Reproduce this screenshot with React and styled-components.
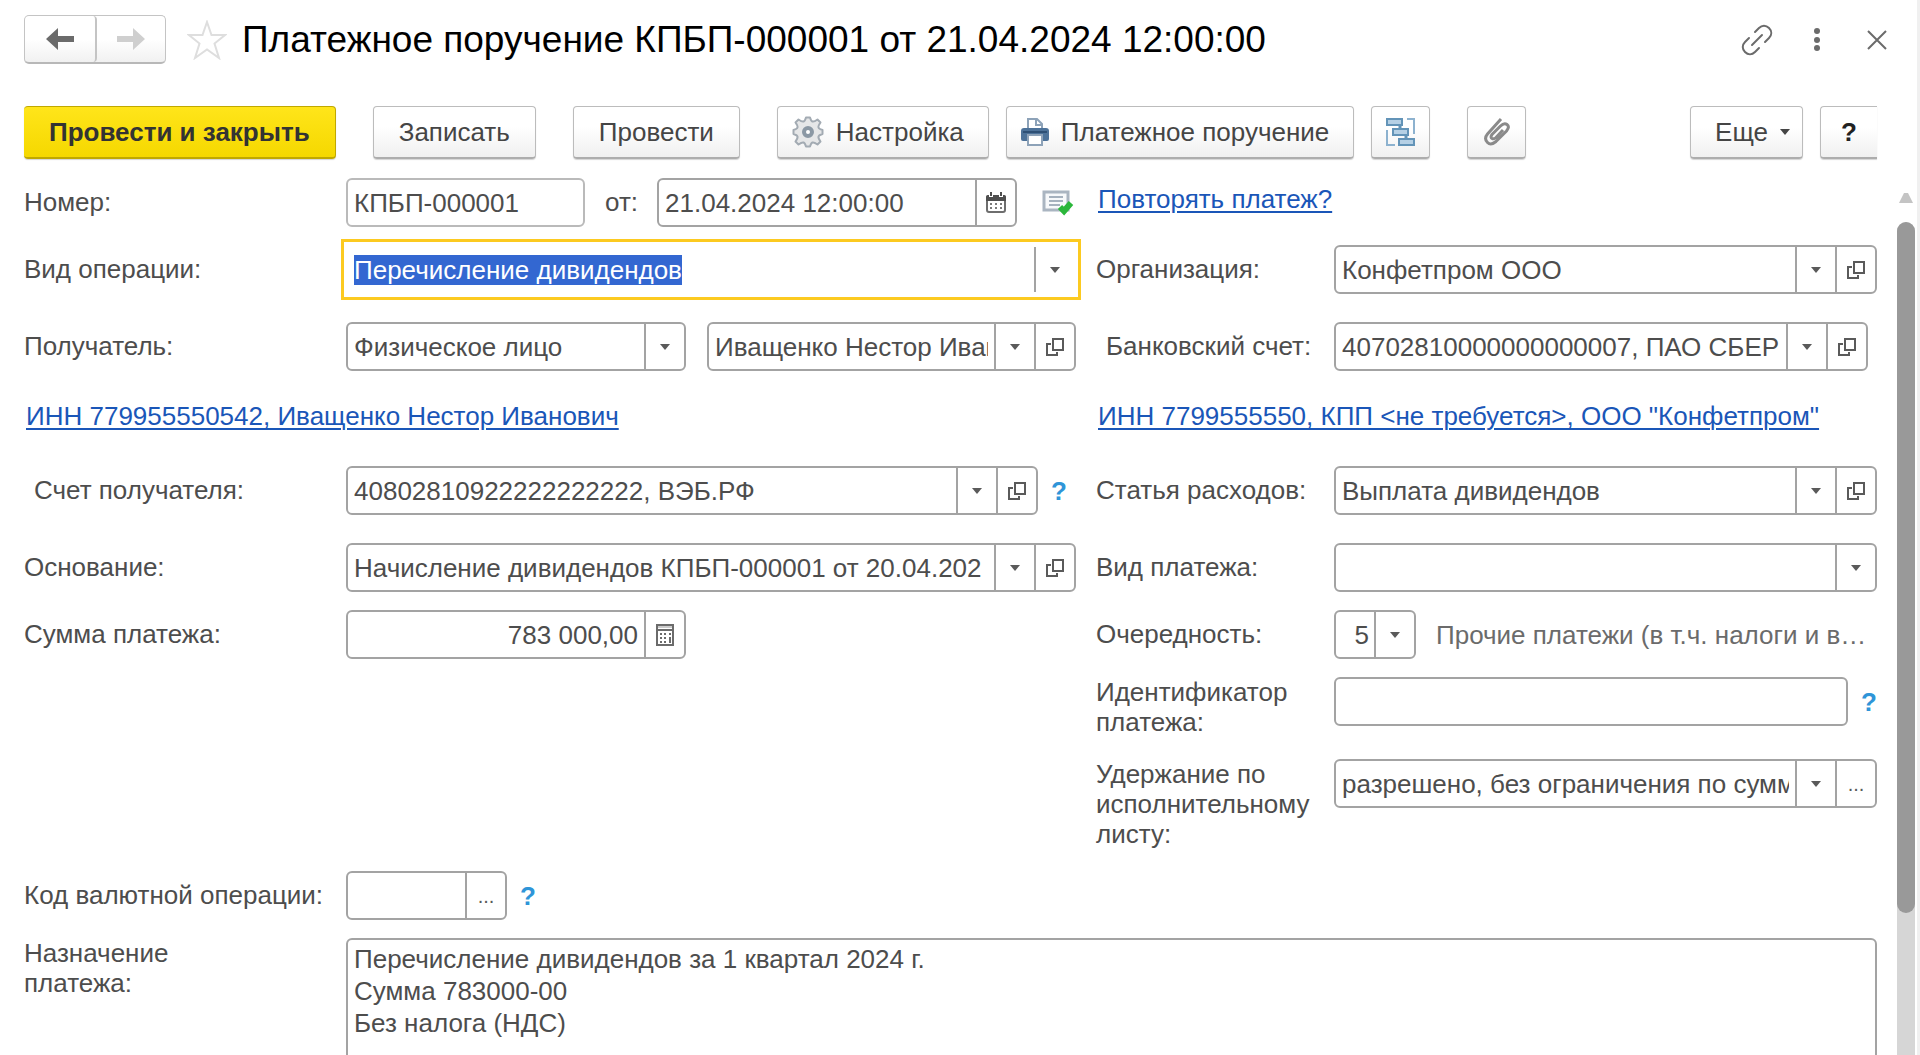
import React, { useEffect, useRef } from 'react';
import styled, { createGlobalStyle, css } from 'styled-components';

const GlobalStyle = createGlobalStyle`
  * {
    box-sizing: border-box;
  }

  body {
    margin: 0;
    background: #fff;
    color: #4d4d4d;
    font-family: 'Liberation Sans', Arial, sans-serif;
    font-size: 26px;
    line-height: 30px;
  }

  button, input, select, textarea {
    margin: 0;
    color: inherit;
    font: inherit;
  }
`;

const Window = styled.div`
  display: flex;
  flex-direction: column;
  height: 100vh;
  overflow: hidden;
  border-right: 3px solid #f0f0f0;
`;

const Header = styled.header`
  display: flex;
  align-items: center;
  padding: 15px 24px 0 24px;
`;

const NavGroup = styled.div`
  display: flex;
  height: 49px;
  border: 1px solid #c4c4c4;
  border-bottom: 2px solid #b8b8b8;
  border-radius: 5px;
  background: linear-gradient(#fff 50%, #f1f1f1);
`;

const NavButton = styled.button`
  display: flex;
  align-items: center;
  justify-content: center;
  width: 70px;
  padding: 0;
  border: 0;
  background: none;
  color: ${(props) => (props.disabled ? '#cfcfcf' : '#6b6b6b')};

  &:first-child {
    width: 72px;
    border-right: 2px solid #c4c4c4;
    border-radius: 4px;
  }

  &:last-child {
    width: 68px;
  }
`;

const IconButton = styled.button`
  display: flex;
  align-items: center;
  justify-content: center;
  width: 32px;
  padding: 0;
  border: 0;
  background: none;
  color: #6b6b6b;
`;

const Star = styled(IconButton)`
  width: 40px;
  margin: 0 15px 0 21px;
`;

const Title = styled.h1`
  flex: 1;
  margin: 0;
  color: #000;
  font-size: 37px;
  font-weight: 400;
  line-height: 48px;
`;

const WindowActions = styled.div`
  display: flex;
  align-items: center;
  gap: 28px;
`;

const Toolbar = styled.div`
  display: flex;
  align-items: flex-start;
  gap: 17px;
  padding: 42px 40px 0 24px;
`;

const Button = styled.button`
  display: flex;
  align-items: center;
  justify-content: center;
  gap: 12px;
  height: 53px;
  padding: 0 25px;
  border: 1px solid #bcbcbc;
  border-bottom: 2px solid #adadad;
  border-radius: 4px;
  background: linear-gradient(#fff 40%, #f0f0f0);
  box-shadow: 0 1px 1px #d4d4d4;
  color: #454545;
  white-space: nowrap;
`;

const ToolButton = styled(Button)`
  padding: 0 24px 0 14px;
`;

const PrimaryButton = styled(Button)`
  border-color: #c0a800;
  border-left: 0;
  background: linear-gradient(#ffe51a, #f5d800);
  color: #333;
  font-weight: 700;
`;

const SquareButton = styled(Button)`
  width: 59px;
  padding: 0;
`;

const MoreButton = styled(Button)`
  margin-left: auto;
  padding: 0 12px 0 24px;
`;

const HelpButton = styled(SquareButton)`
  width: 57px;
  border-right: 0;
  border-radius: 4px 0 0 4px;
  color: #222;
  font-weight: 700;
`;

// wraps a toolbar group that stands apart from its neighbours
const Spaced = styled.div`
  display: flex;
  gap: 37px;
  margin: 0 ${(props) => (props.$after ? 20 : 0)}px 0 20px;
`;

const Content = styled.div`
  display: flex;
  flex: 1;
  gap: 20px;
  min-height: 0;
  padding: 19px 2px 0 24px;
`;

const Form = styled.form`
  flex: 1;
  min-width: 0;
`;

const Row = styled.div`
  display: grid;
  grid-template-columns: 322px minmax(0, 730fr) 258px minmax(0, 543fr);
  align-items: ${(props) => (props.$top ? 'start' : 'center')};
  margin-bottom: ${(props) => props.$space || 18}px;
`;

const Label = styled.label`
  padding-left: ${(props) => (props.$indent ? 10 : 0)}px;
  padding-bottom: ${(props) => (props.$multi ? 0 : 2)}px;

  &:nth-child(3) {
    margin-left: 20px;
  }
`;

const Cell = styled.div`
  display: flex;
  grid-column: ${(props) => (props.$full ? '2 / -1' : 'auto')};
  align-items: center;
  min-width: 0;
  padding-right: ${(props) => (props.$inset ? 9 : 0)}px;
`;

const RightLabel = styled(Label)`
  grid-column: 3;
  margin-left: 20px;
`;

const LinkCell = styled.div`
  grid-column: ${(props) => (props.$right ? '3 / -1' : '1 / 3')};
  padding: 0 0 7px ${(props) => (props.$right ? 22 : 2)}px;
  white-space: nowrap;
`;

const Link = styled.a`
  color: #1a56b8;
  text-decoration: underline;
  text-decoration-thickness: 2px;
  text-underline-offset: 3px;
`;

const Field = styled.div`
  position: relative;
  display: flex;
  flex: ${(props) => (props.$width ? `0 0 ${props.$width}px` : '1 1 0')};
  min-width: 0;
  height: 49px;
  border: 2px solid ${(props) => (props.$muted ? '#bababa' : '#a3a3a3')};
  border-radius: 6px;
  background: #fff;

  ${(props) => props.$focused && css`
    height: 61px;
    margin: -6px -5px;
    padding: 5px 4px;
    border: 3px solid #fcca20;
    border-radius: 0;
  `}
`;

const Input = styled.input`
  flex: 1;
  width: 0;
  min-width: 0;
  padding: 0 6px;
  border: 0;
  outline: 0;
  background: none;
  text-align: ${(props) => props.$align || 'left'};

  &::selection {
    background: #3367d1;
    color: #fff;
  }
`;

const Select = styled.select`
  flex: 1;
  width: 0;
  min-width: 0;
  padding: 0 45px 0 6px;
  border: 0;
  outline: 0;
  background: none;
  appearance: none;
  text-align: ${(props) => props.$align || 'left'};
  text-align-last: ${(props) => props.$align || 'left'};
`;

const fieldPart = css`
  display: flex;
  align-items: center;
  justify-content: center;
  width: 40px;
  border: 0;
  border-left: 2px solid #a3a3a3;
`;

const FieldButton = styled.button`
  ${fieldPart}
  flex: none;
  padding: 0;
  background: none;
  color: #5a5a5a;
  font-size: 20px;
`;

const SelectArrow = styled.span`
  ${fieldPart}
  position: absolute;
  top: 0;
  right: 0;
  bottom: 0;
  color: #5a5a5a;
  pointer-events: none;
`;

const DateLabel = styled.label`
  padding: 0 19px 2px 20px;
`;

const Hint = styled.button`
  flex: none;
  width: 16px;
  margin-left: 13px;
  padding: 0;
  border: 0;
  background: none;
  color: #2f95d8;
  font-weight: 700;
`;

const Status = styled.span`
  display: flex;
  margin-left: 25px;
`;

const Note = styled.span`
  overflow: hidden;
  padding-left: 20px;
  color: #6b6b6b;
  white-space: nowrap;
`;

const Gap = styled.div`
  flex: none;
  width: 21px;
`;

const TextArea = styled.textarea`
  flex: 1;
  height: 180px;
  padding: 3px 6px;
  border: 2px solid #a3a3a3;
  border-radius: 6px;
  outline: 0;
  line-height: 32px;
  resize: none;
`;

const Scroll = styled.div`
  display: flex;
  flex-direction: column;
  align-items: center;
  width: 18px;
  padding-top: 15px;
  color: #c4c4c4;
`;

const Track = styled.div`
  flex: 1;
  width: 18px;
  margin-top: 19px;
  border-radius: 9px 9px 0 0;
  background: #d6d6d6;
`;

const Thumb = styled.div`
  height: 83%;
  border-radius: 9px;
  background: #999;
`;

const ArrowIcon = ({ flip }) => (
  <svg width="28" height="22" viewBox="0 0 28 22" fill="currentColor" transform={flip ? 'scale(-1 1)' : undefined}>
    <path d="M0 11 12 0V8H28V14H12V22Z" />
  </svg>
);

const StarIcon = () => (
  <svg width="40" height="40" viewBox="0 0 40 40" fill="none" stroke="#dedede" strokeWidth="2">
    <path d="M20 2 24.500 15H38L27.500 23.500 32 38 20 29.500 8 38 12.500 23.500 2 15H15.500Z" />
  </svg>
);

const LinkIcon = () => (
  <svg width="32" height="32" viewBox="0 0 32 32" fill="none" stroke="currentColor" strokeWidth="2" strokeLinecap="round">
    <path d="M11 21 21 11" />
    <path d="M14 8 18 4C21 1 25 1 28 4S31 11 28 14L24 18" />
    <path d="M8 14 4 18C1 21 1 25 4 28S11 31 14 28L18 24" />
  </svg>
);

const DotsIcon = () => (
  <svg width="6" height="24" viewBox="0 0 6 24" fill="currentColor">
    <circle cx="3" cy="3" r="3" />
    <circle cx="3" cy="12" r="3" />
    <circle cx="3" cy="20" r="3" />
  </svg>
);

const CloseIcon = () => (
  <svg width="20" height="20" viewBox="0 0 20 20" fill="none" stroke="currentColor" strokeWidth="2">
    <path d="M1 1 19 19M19 1 1 19" />
  </svg>
);

const GearIcon = () => (
  <svg width="32" height="32" viewBox="0 0 32 32">
    <g stroke="#a3abb3" strokeWidth="2" fill="#e6e7e8">
      <path
        strokeLinejoin="round"
        d="M14 1.500H18Q19 5 20.500 5.500T25.500 3.500L28.500 6.500Q26 10 26.500 11.500T30.500 14V18Q27 19 26.500 20.500T28.500 25.500L25.500 28.500Q22 26 20.500 26.500T18 30.500H14Q13 27 11.500 26.500T6.500 28.500L3.500 25.500Q6 22 5.500 20.500T1.500 18V14Q5 13 5.500 11.500T3.500 6.500L6.500 3.500Q10 6 11.500 5.500T14 1.500Z"
      />
      <circle cx="16" cy="16" r="4" stroke="#8b98a4" strokeWidth="4" fill="#fff" />
    </g>
  </svg>
);

const PrinterIcon = () => (
  <svg width="28" height="30" viewBox="0 0 28 30">
    <path d="M7 13V2H16L21 7V13" fill="#fff" stroke="#8da2b8" strokeWidth="2" />
    <path d="M15 2V8H21" fill="none" stroke="#8da2b8" strokeWidth="2" />
    <path d="M3 11H25Q28 11 28 14V22Q28 24 26 24H2Q0 24 0 22V14Q0 11 3 11Z" fill="#4d7299" />
    <path d="M2 15H26" stroke="#2e5075" strokeWidth="2" />
    <rect x="7" y="18" width="14" height="10" fill="#fff" stroke="#8da2b8" strokeWidth="2" />
  </svg>
);

const StructureIcon = () => (
  <svg width="30" height="30" viewBox="0 0 30 30" fill="none">
    <path d="M21 2H28V17M1 13V28H9" stroke="#8db2cf" strokeWidth="2" />
    <path d="M14 8V12M20 18V22" stroke="#6394b8" strokeWidth="3" />
    <g fill="#b5d0e5" stroke="#6394b8" strokeWidth="2">
      <rect x="1" y="2" width="15" height="6" />
      <rect x="7" y="12" width="15" height="6" />
      <rect x="13" y="22" width="15" height="6" />
    </g>
  </svg>
);

const ClipIcon = () => (
  <svg width="26" height="28" viewBox="0 0 26 28" fill="none" stroke="#8a8a8a" strokeWidth="3">
    <path d="M17 1 3.500 16C1 19 1 22 3.500 24.500S9 26 12 23.500L22.500 13C25 10 25 8 23 6.500S18.500 6 16.500 8L8 16.500C6.500 18.500 7 20 8 20.500S10.500 21 12 19.500L19 12" />
  </svg>
);

const CaretIcon = () => (
  <svg width="10" height="6" viewBox="0 0 10 6" fill="currentColor">
    <path d="M0 0H10L5 6Z" />
  </svg>
);

const OpenIcon = () => (
  <svg width="20" height="20" viewBox="0 0 20 20" fill="none" stroke="currentColor" strokeWidth="2">
    <rect x="8" y="2" width="10" height="11" />
    <path d="M6 7H2V18H12V15" />
  </svg>
);

const CalendarIcon = () => (
  <svg width="20" height="22" viewBox="0 0 20 22">
    <rect x="1" y="4" width="18" height="16" rx="2" fill="#fff" stroke="#6e6e6e" strokeWidth="2" />
    <path d="M2 3H18Q20 3 20 5V9H0V5Q0 3 2 3Z" fill="#4f4f4f" />
    <path d="M5 0V5M15 0V5" stroke="#fff" strokeWidth="4" />
    <path d="M5 0V4M15 0V4" stroke="#4f4f4f" strokeWidth="2" />
    <path d="M4 12H16M4 16H16" stroke="#7a7a7a" strokeWidth="2" strokeDasharray="2 3" />
  </svg>
);

const CalculatorIcon = () => (
  <svg width="18" height="22" viewBox="0 0 18 22" fill="none" stroke="#6b6b6b">
    <rect x="1" y="1" width="16" height="20" strokeWidth="2" />
    <path d="M1 6H17" strokeWidth="2" />
    <path d="M2 3H16" stroke="#ccc" strokeWidth="2" />
    <path d="M4 10H11M4 14H11M4 18H11" strokeWidth="2" strokeDasharray="2 2" />
    <path d="M13 10H15M14 13V19" strokeWidth="2" />
  </svg>
);

const PostedIcon = () => (
  <svg width="32" height="26" viewBox="0 0 32 26" fill="none">
    <rect x="2" y="2" width="24" height="18" fill="#f7f9fb" stroke="#aab5c1" strokeWidth="3" />
    <path d="M7 7H21M7 11H21M7 15H18" stroke="#a5b1be" strokeWidth="2" />
    <path d="M18 17 22 21 29 13" stroke="#2bb73b" strokeWidth="6" />
  </svg>
);

const ScrollUpIcon = () => (
  <svg width="14" height="10" viewBox="0 0 14 10" fill="currentColor">
    <path d="M5 0H9L14 10H0Z" />
  </svg>
);

const DropButton = () => (
  <FieldButton type="button" aria-label="Выбрать"><CaretIcon /></FieldButton>
);

const OpenButton = () => (
  <FieldButton type="button" aria-label="Открыть"><OpenIcon /></FieldButton>
);

const App = () => {
  const operationRef = useRef(null);

  useEffect(() => {
    operationRef.current.focus();
    operationRef.current.select();
  }, []);

  return (
    <Window>
      <GlobalStyle />
      <Header>
        <NavGroup>
          <NavButton type="button" aria-label="Назад"><ArrowIcon /></NavButton>
          <NavButton type="button" aria-label="Вперед" disabled><ArrowIcon flip /></NavButton>
        </NavGroup>
        <Star type="button" aria-label="В избранное"><StarIcon /></Star>
        <Title>Платежное поручение КПБП-000001 от 21.04.2024 12:00:00</Title>
        <WindowActions>
          <IconButton type="button" aria-label="Ссылка"><LinkIcon /></IconButton>
          <IconButton type="button" aria-label="Меню"><DotsIcon /></IconButton>
          <IconButton type="button" aria-label="Закрыть"><CloseIcon /></IconButton>
        </WindowActions>
      </Header>

      <Toolbar>
        <PrimaryButton type="button">Провести и закрыть</PrimaryButton>
        <Spaced $after>
          <Button type="button">Записать</Button>
          <Button type="button">Провести</Button>
        </Spaced>
        <ToolButton type="button"><GearIcon />Настройка</ToolButton>
        <ToolButton type="button"><PrinterIcon />Платежное поручение</ToolButton>
        <SquareButton type="button" aria-label="Структура подчиненности"><StructureIcon /></SquareButton>
        <Spaced>
          <SquareButton type="button" aria-label="Файлы"><ClipIcon /></SquareButton>
        </Spaced>
        <MoreButton type="button">Еще <CaretIcon /></MoreButton>
        <HelpButton type="button">?</HelpButton>
      </Toolbar>

      <Content>
        <Form>
          <Row>
            <Label htmlFor="number">Номер:</Label>
            <Cell>
              <Field $width={239} $muted>
                <Input id="number" defaultValue="КПБП-000001" />
              </Field>
              <DateLabel htmlFor="date">от:</DateLabel>
              <Field $width={360}>
                <Input id="date" defaultValue="21.04.2024 12:00:00" />
                <FieldButton type="button" aria-label="Календарь"><CalendarIcon /></FieldButton>
              </Field>
              <Status><PostedIcon /></Status>
            </Cell>
            <LinkCell $right><Link href="#repeat">Повторять платеж?</Link></LinkCell>
          </Row>

          <Row $space={28}>
            <Label htmlFor="operation">Вид операции:</Label>
            <Cell>
              <Field $focused>
                <Input id="operation" ref={operationRef} defaultValue="Перечисление дивидендов" />
                <DropButton />
              </Field>
            </Cell>
            <Label htmlFor="organization">Организация:</Label>
            <Cell>
              <Field>
                <Input id="organization" defaultValue="Конфетпром ООО" />
                <DropButton />
                <OpenButton />
              </Field>
            </Cell>
          </Row>

          <Row $space={30}>
            <Label htmlFor="recipient-kind">Получатель:</Label>
            <Cell>
              <Field $width={340}>
                <Select id="recipient-kind">
                  <option>Физическое лицо</option>
                </Select>
                <SelectArrow><CaretIcon /></SelectArrow>
              </Field>
              <Gap />
              <Field>
                <Input aria-label="Получатель" defaultValue="Иващенко Нестор Иванович" />
                <DropButton />
                <OpenButton />
              </Field>
            </Cell>
            <Label htmlFor="bank-account" $indent>Банковский счет:</Label>
            <Cell $inset>
              <Field>
                <Input id="bank-account" defaultValue="40702810000000000007, ПАО СБЕРБАНК" />
                <DropButton />
                <OpenButton />
              </Field>
            </Cell>
          </Row>

          <Row $space={28}>
            <LinkCell><Link href="#recipient">ИНН 779955550542, Иващенко Нестор Иванович</Link></LinkCell>
            <LinkCell $right><Link href="#payer">ИНН 7799555550, КПП &lt;не требуется&gt;, ООО "Конфетпром"</Link></LinkCell>
          </Row>

          <Row $space={28}>
            <Label htmlFor="recipient-account" $indent>Счет получателя:</Label>
            <Cell $inset>
              <Field>
                <Input id="recipient-account" defaultValue="40802810922222222222, ВЭБ.РФ" />
                <DropButton />
                <OpenButton />
              </Field>
              <Hint type="button">?</Hint>
            </Cell>
            <Label htmlFor="expense">Статья расходов:</Label>
            <Cell>
              <Field>
                <Input id="expense" defaultValue="Выплата дивидендов" />
                <DropButton />
                <OpenButton />
              </Field>
            </Cell>
          </Row>

          <Row>
            <Label htmlFor="basis">Основание:</Label>
            <Cell>
              <Field>
                <Input id="basis" defaultValue="Начисление дивидендов КПБП-000001 от 20.04.202" />
                <DropButton />
                <OpenButton />
              </Field>
            </Cell>
            <Label htmlFor="payment-kind">Вид платежа:</Label>
            <Cell>
              <Field>
                <Select id="payment-kind">
                  <option></option>
                </Select>
                <SelectArrow><CaretIcon /></SelectArrow>
              </Field>
            </Cell>
          </Row>

          <Row>
            <Label htmlFor="amount">Сумма платежа:</Label>
            <Cell>
              <Field $width={340}>
                <Input id="amount" $align="right" defaultValue="783 000,00" />
                <FieldButton type="button" aria-label="Калькулятор"><CalculatorIcon /></FieldButton>
              </Field>
            </Cell>
            <Label htmlFor="priority">Очередность:</Label>
            <Cell>
              <Field $width={82}>
                <Select id="priority" $align="right">
                  <option>5</option>
                </Select>
                <SelectArrow><CaretIcon /></SelectArrow>
              </Field>
              <Note>Прочие платежи (в т.ч. налоги и в…</Note>
            </Cell>
          </Row>

          <Row $top $space={22}>
            <RightLabel htmlFor="payment-id" $multi>Идентификатор<br />платежа:</RightLabel>
            <Cell>
              <Field>
                <Input id="payment-id" />
              </Field>
              <Hint type="button">?</Hint>
            </Cell>
          </Row>

          <Row $top $space={22}>
            <RightLabel htmlFor="withholding" $multi>Удержание по<br />исполнительному<br />листу:</RightLabel>
            <Cell>
              <Field>
                <Input id="withholding" defaultValue="разрешено, без ограничения по сумме" />
                <DropButton />
                <FieldButton type="button">...</FieldButton>
              </Field>
            </Cell>
          </Row>

          <Row>
            <Label htmlFor="currency-code">Код валютной операции:</Label>
            <Cell>
              <Field $width={161}>
                <Input id="currency-code" />
                <FieldButton type="button">...</FieldButton>
              </Field>
              <Hint type="button">?</Hint>
            </Cell>
          </Row>

          <Row $top>
            <Label htmlFor="purpose" $multi>Назначение<br />платежа:</Label>
            <Cell $full>
              <TextArea
                id="purpose"
                defaultValue={'Перечисление дивидендов за 1 квартал 2024 г.\nСумма 783000-00\nБез налога (НДС)'}
              />
            </Cell>
          </Row>
        </Form>

        <Scroll>
          <ScrollUpIcon />
          <Track>
            <Thumb />
          </Track>
        </Scroll>
      </Content>
    </Window>
  );
};

export default App;
